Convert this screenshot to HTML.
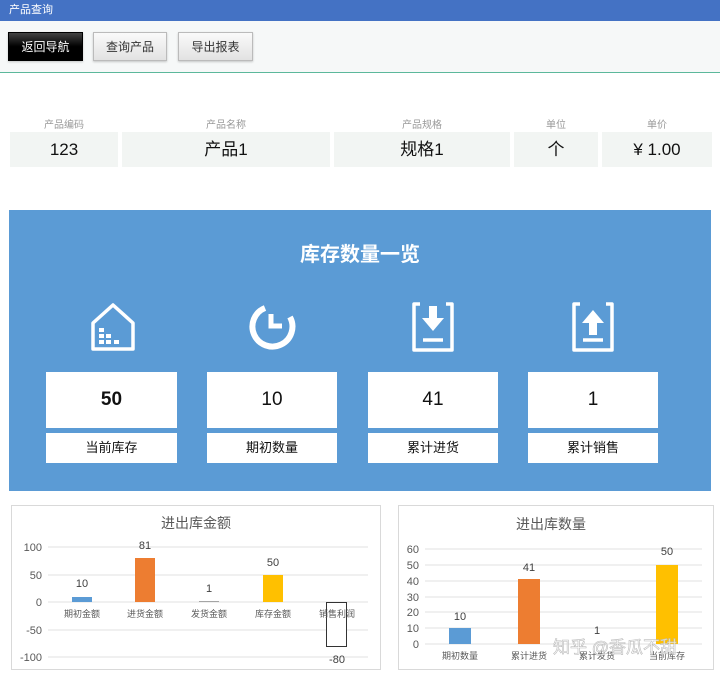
<!DOCTYPE html>
<html><head><meta charset="utf-8"><style>
*{margin:0;padding:0;box-sizing:border-box}
body{width:720px;height:675px;background:#fff;font-family:"Liberation Sans","Noto Sans CJK SC",sans-serif;position:relative;overflow:hidden}
.a{position:absolute}
.btn{position:absolute;top:32px;height:29px;font-size:12px;text-align:center;line-height:29px;border:1px solid #bbb;background:linear-gradient(#fafafa,#e2e2e2);color:#333;box-shadow:0 1px 2px rgba(0,0,0,.2)}
.lab{position:absolute;top:116px;font-size:10px;color:#999;text-align:center}
.cell{position:absolute;top:132px;height:35px;background:#f2f5f3;font-size:17px;text-align:center;line-height:35px;color:#111}
.box{position:absolute;top:372px;height:56px;background:#fff;text-align:center;line-height:56px;font-size:19px;color:#111}
.lb{position:absolute;top:433px;height:30px;background:#fff;text-align:center;line-height:30px;font-size:13px;color:#111}
</style></head><body>
<div class="a" style="left:0;top:0;width:720px;height:21px;background:#4472c4;color:#fff;font-size:11px;line-height:21px;padding-left:9px">产品查询</div>
<div class="a" style="left:0;top:21px;width:720px;height:52px;background:#f6f8f8;border-bottom:1px solid #5cb89b"></div>
<div class="btn" style="left:8px;width:75px;background:linear-gradient(#444,#000 50%);color:#fff;border-color:#000">返回导航</div>
<div class="btn" style="left:93px;width:74px">查询产品</div>
<div class="btn" style="left:178px;width:75px">导出报表</div>

<div class="lab" style="left:10px;width:108px">产品编码</div>
<div class="lab" style="left:122px;width:208px">产品名称</div>
<div class="lab" style="left:334px;width:176px">产品规格</div>
<div class="lab" style="left:514px;width:84px">单位</div>
<div class="lab" style="left:602px;width:110px">单价</div>
<div class="cell" style="left:10px;width:108px">123</div>
<div class="cell" style="left:122px;width:208px">产品1</div>
<div class="cell" style="left:334px;width:176px">规格1</div>
<div class="cell" style="left:514px;width:84px">个</div>
<div class="cell" style="left:602px;width:110px">¥ 1.00</div>

<div class="a" style="left:9px;top:210px;width:702px;height:281px;background:#5b9bd5"></div>
<div class="a" style="left:9px;top:238px;width:702px;text-align:center;color:#fff;font-size:20px;font-weight:bold">库存数量一览</div>
<svg class="a" style="left:0;top:290px" width="720" height="80" fill="none" stroke="#fff" stroke-width="3">
 <path d="M93 59 V33 L113 15 L133 33 V59 Z" stroke-linejoin="round" stroke-width="3.5"/>
 <g fill="#fff" stroke="none"><rect x="99" y="38" width="5" height="4"/><rect x="99" y="44" width="5" height="4"/><rect x="99" y="50" width="5" height="4"/><rect x="106" y="44" width="5" height="4"/><rect x="106" y="50" width="5" height="4"/><rect x="114" y="50" width="5" height="4"/></g>
 <path d="M265 18 A20 20 0 1 0 290 27" stroke-width="6"/>
 <path d="M271 24 V36 H282" stroke-width="5"/>
 <path d="M420 14 H414 V60 H452 V14 H446" stroke-width="3.5" stroke-linejoin="round"/>
 <path d="M423 50 H443" stroke-width="3.5"/>
 <path d="M429 16 V28 H422 L433 41 L444 28 H437 V16 Z" fill="#fff" stroke="none"/>
 <path d="M580 14 H574 V60 H612 V14 H606" stroke-width="3.5" stroke-linejoin="round"/>
 <path d="M583 50 H603" stroke-width="3.5"/>
 <path d="M589 45 V33 H582 L593 20 L604 33 H597 V45 Z" fill="#fff" stroke="none"/>
</svg>
<div class="box" style="left:46px;width:131px;font-weight:bold">50</div>
<div class="box" style="left:207px;width:130px">10</div>
<div class="box" style="left:368px;width:130px">41</div>
<div class="box" style="left:528px;width:130px">1</div>
<div class="lb" style="left:46px;width:131px">当前库存</div>
<div class="lb" style="left:207px;width:130px">期初数量</div>
<div class="lb" style="left:368px;width:130px">累计进货</div>
<div class="lb" style="left:528px;width:130px">累计销售</div>

<svg class="a" style="left:0;top:0" width="720" height="675" font-family="Liberation Sans,Noto Sans CJK SC,sans-serif">
 <rect x="11.5" y="505.5" width="369" height="164" fill="#fff" stroke="#d9d9d9"/>
 <text x="196" y="528" font-size="14" fill="#595959" text-anchor="middle">进出库金额</text>
 <g stroke="#e0e0e0"><line x1="48" y1="547" x2="368" y2="547"/><line x1="48" y1="575" x2="368" y2="575"/><line x1="48" y1="602" x2="368" y2="602"/><line x1="48" y1="630" x2="368" y2="630"/><line x1="48" y1="657" x2="368" y2="657"/></g>
 <g font-size="11" fill="#595959" text-anchor="end"><text x="42" y="551">100</text><text x="42" y="579">50</text><text x="42" y="606">0</text><text x="42" y="634">-50</text><text x="42" y="661">-100</text></g>
 <rect x="72" y="597" width="20" height="5" fill="#5b9bd5"/>
 <rect x="135" y="558" width="20" height="44" fill="#ed7d31"/>
 <rect x="199" y="601" width="20" height="1" fill="#a5a5a5"/>
 <rect x="263" y="575" width="20" height="27" fill="#ffc000"/>
 <rect x="326.5" y="602.5" width="20" height="44" fill="#fff" stroke="#333"/>
 <g font-size="11" fill="#404040" text-anchor="middle"><text x="82" y="587">10</text><text x="145" y="549">81</text><text x="209" y="592">1</text><text x="273" y="566">50</text><text x="337" y="663">-80</text></g>
 <g font-size="9" fill="#595959" text-anchor="middle"><text x="82" y="617">期初金额</text><text x="145" y="617">进货金额</text><text x="209" y="617">发货金额</text><text x="273" y="617">库存金额</text><text x="337" y="617">销售利润</text></g>

 <rect x="398.5" y="505.5" width="315" height="164" fill="#fff" stroke="#d9d9d9"/>
 <text x="551" y="529" font-size="14" fill="#595959" text-anchor="middle">进出库数量</text>
 <g stroke="#e0e0e0"><line x1="425" y1="549" x2="702" y2="549"/><line x1="425" y1="565" x2="702" y2="565"/><line x1="425" y1="581" x2="702" y2="581"/><line x1="425" y1="597" x2="702" y2="597"/><line x1="425" y1="612" x2="702" y2="612"/><line x1="425" y1="628" x2="702" y2="628"/><line x1="425" y1="644" x2="702" y2="644"/></g>
 <g font-size="11" fill="#595959" text-anchor="end"><text x="419" y="553">60</text><text x="419" y="569">50</text><text x="419" y="585">40</text><text x="419" y="601">30</text><text x="419" y="616">20</text><text x="419" y="632">10</text><text x="419" y="648">0</text></g>
 <rect x="449" y="628" width="22" height="16" fill="#5b9bd5"/>
 <rect x="518" y="579" width="22" height="65" fill="#ed7d31"/>
 <rect x="656" y="565" width="22" height="79" fill="#ffc000"/>
 <g font-size="11" fill="#404040" text-anchor="middle"><text x="460" y="620">10</text><text x="529" y="571">41</text><text x="597" y="634">1</text><text x="667" y="555">50</text></g>
 <g font-size="9" fill="#595959" text-anchor="middle"><text x="460" y="659">期初数量</text><text x="529" y="659">累计进货</text><text x="597" y="659">累计发货</text><text x="667" y="659">当前库存</text></g>
 <text x="553" y="653" font-size="17" fill="#fff" fill-opacity="0.75" stroke="#bbb" stroke-width="0.6">知乎 @香瓜不甜</text>
</svg>
</body></html>
